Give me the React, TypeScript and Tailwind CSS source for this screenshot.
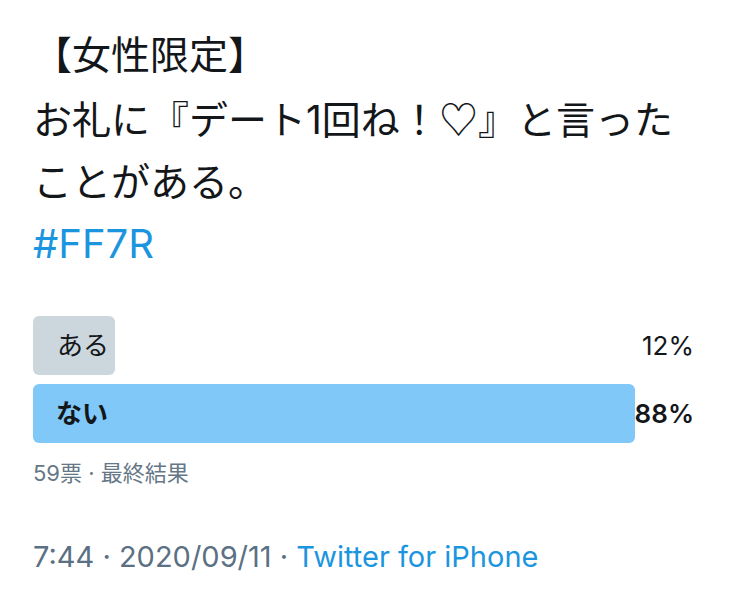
export default function App() {
  const font = { fontFamily: 'Inter, "Noto Sans CJK JP", sans-serif' };
  const cjk = { fontFamily: '"Noto Sans CJK JP", sans-serif' };
  return (
    <div className="min-h-screen w-[750px] bg-white pl-[33px] pr-[56px] pt-[24px]" style={font}>
      {/* Tweet body */}
      <div className="whitespace-nowrap text-[39px] leading-[62px] text-[#14171a]">
        <p>【女性限定】</p>
        <p>
          お礼に『デート1回ね！<span style={cjk}>♡</span>』と言った
        </p>
        <p>ことがある。</p>
        <p className="text-[40px] text-[#1b95e0]">#FF7R</p>
      </div>

      {/* Poll */}
      <div className="mt-[41px] flex flex-col gap-[9px]">
        <div className="flex h-[59px] items-center justify-between">
          <div className="flex h-full w-[82px] items-center rounded-md bg-[#ccd6dd] pl-[24px] text-[26px] text-[#14171a]">
            ある
          </div>
          <span className="text-[26px] text-[#14171a]">12%</span>
        </div>
        <div className="flex h-[59px] items-center justify-between">
          <div className="flex h-full w-[603px] items-center rounded-md bg-[#7fc8f8] pl-[23px] text-[26px] font-bold text-[#14171a]">
            ない
          </div>
          <span className="text-[26px] font-semibold text-[#14171a]">88%</span>
        </div>
      </div>

      <p className="mt-[14px] text-[22px] text-[#657786]">59票 · 最終結果</p>

      {/* Meta */}
      <p className="mt-[45px] text-[29px] text-[#5b7083]">
        7:44 · 2020/09/11 · <span className="text-[#1b95e0]">Twitter for iPhone</span>
      </p>
    </div>
  );
}
